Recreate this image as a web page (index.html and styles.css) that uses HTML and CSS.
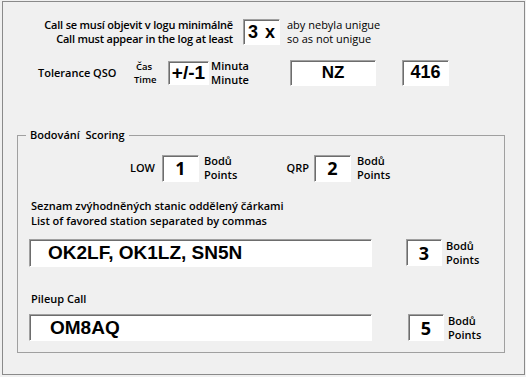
FILE: index.html
```html
<!DOCTYPE html>
<html lang="cs">
<head>
    <meta charset="UTF-8">
    <title>Nastavení</title>
    <link rel="stylesheet" href="styles.css">
</head>
<body>
    <div class="frame">
        <!-- minimální výskyt v logu -->
        <div class="row unique-row">
            <div class="label unique-label">Call se musí objevit v logu minimálně<br>Call must appear in the log at least</div>
            <div class="box num-box unique-box">3 x</div>
            <div class="note">aby nebyla unigue<br>so as not unigue</div>
        </div>

        <!-- tolerance -->
        <div class="row tol-row">
            <div class="label tol-label">Tolerance QSO</div>
            <div class="small cas">Čas<br>Time</div>
            <div class="box num-box tol-box">+/-1</div>
            <div class="label minuta">Minuta<br>Minute</div>
            <div class="box num-box nz-box">NZ</div>
            <div class="box num-box cnt-box">416</div>
        </div>

        <fieldset class="scoring">
            <legend>Bodování&nbsp; Scoring</legend>

            <div class="row pts-row">
                <div class="label pts-name low-name">LOW</div>
                <div class="box pt-box low-box">1</div>
                <div class="label pts-unit">Bodů<br>Points</div>
                <div class="label pts-name qrp-name">QRP</div>
                <div class="box pt-box qrp-box">2</div>
                <div class="label pts-unit qrp-unit">Bodů<br>Points</div>
            </div>

            <div class="label list-label">Seznam zvýhodněných stanic oddělený čárkami<br>List of favored station separated by commas</div>
            <div class="row call-row">
                <div class="box call-input">OK2LF, OK1LZ, SN5N</div>
                <div class="box pt-box fav-box">3</div>
                <div class="label pts-unit fav-unit">Bodů<br>Points</div>
            </div>

            <div class="label pileup-label">Pileup Call</div>
            <div class="row call-row pileup-row">
                <div class="box call-input pileup-input">OM8AQ</div>
                <div class="box pt-box pileup-box">5</div>
                <div class="label pts-unit pileup-unit">Bodů<br>Points</div>
            </div>
        </fieldset>
    </div>
</body>
</html>
```

FILE: styles.css
```css
body {
    margin: 0;
    background-color: #f0f0f0;
    font-family: "Open Sans", "Noto Sans", sans-serif;
    color: #000;
}
.frame {
    margin: 1px 1px 2px 2px;
    height: 374px;
    box-sizing: border-box;
    border: 1px solid #8a8a8a;
    overflow: hidden;
}
.row {
    display: flex;
    align-items: center;
}
.label {
    font-size: 11px;
    font-weight: 600;
    line-height: 14px;
    white-space: nowrap;
}
.box {
    box-sizing: border-box;
    background: #fff;
    border: 1px solid;
    border-color: #a0a0a0 #fff #fff #a0a0a0;
    box-shadow: inset 1px 1px 0 #6d6d6d;
    display: flex;
    align-items: center;
    justify-content: center;
}
.num-box {
    font-family: "Liberation Sans", Arial, sans-serif;
    font-weight: bold;
    font-size: 18px;
}

/* první řádek */
.unique-row {
    margin-top: 16px;
}
.unique-label {
    width: 193px;
    margin-left: 37px;
    text-align: right;
    letter-spacing: -0.2px;
}
.unique-box {
    width: 37px;
    height: 26px;
    margin-left: 10px;
    word-spacing: 2px;
}
.note {
    margin-left: 7px;
    font-size: 11px;
    line-height: 14px;
}

/* tolerance */
.tol-row {
    margin-top: 13px;
    height: 27px;
}
.tol-label {
    width: 96px;
    margin-left: 35px;
}
.small {
    font-size: 9.5px;
    font-weight: 600;
    line-height: 13px;
    text-align: center;
}
.cas {
    width: 20px;
}
.tol-box {
    width: 41px;
    height: 24px;
    margin-left: 14px;
    font-size: 19px;
}
.minuta {
    width: 40px;
    margin-left: 2px;
}
.nz-box {
    width: 86px;
    height: 26px;
    margin-left: 39px;
    font-size: 17px;
}
.cnt-box {
    width: 47px;
    height: 26px;
    margin-left: 26px;
    align-items: flex-start;
    padding-top: 1px;
}

/* bodování */
.scoring {
    margin: 42px 0 0 14px;
    padding: 0;
    width: 488px;
    height: 225px;
    box-sizing: border-box;
    border: 1px solid #a0a0a0;
    border-radius: 0;
}
.scoring legend {
    margin-left: 8px;
    padding: 0 4px;
    font-size: 11px;
    font-weight: 600;
    line-height: 14px;
}
.pts-row {
    margin-top: 12px;
}
.pts-name {
    width: 40px;
    text-align: right;
}
.low-name {
    margin-left: 97px;
}
.qrp-name {
    margin-left: 25px;
}
.pt-box {
    width: 37px;
    height: 27px;
    margin-left: 7px;
    font-weight: bold;
    font-size: 18px;
}
.qrp-box {
    margin-left: 5px;
}
.pts-unit {
    width: 40px;
    margin-left: 5px;
}
.qrp-unit {
    margin-left: 6px;
}
.list-label {
    margin: 16px 0 0 13px;
    line-height: 15px;
}
.call-row {
    margin-top: 11px;
    align-items: flex-start;
}
.call-input {
    width: 343px;
    height: 28px;
    margin-left: 11px;
    justify-content: flex-start;
    padding-left: 18px;
    font-family: "Liberation Sans", Arial, sans-serif;
    font-weight: bold;
    font-size: 19px;
}
.fav-box {
    width: 36px;
    margin-left: 34px;
}
.fav-unit {
    margin-left: 4px;
}
.pileup-label {
    margin: 24px 0 0 13px;
    line-height: 15px;
}
.pileup-row {
    margin-top: 8px;
}
.pileup-input {
    height: 27px;
    padding-left: 20px;
}
.pileup-box {
    width: 36px;
    margin-left: 36px;
}
.pileup-unit {
    margin-left: 4px;
}
```
